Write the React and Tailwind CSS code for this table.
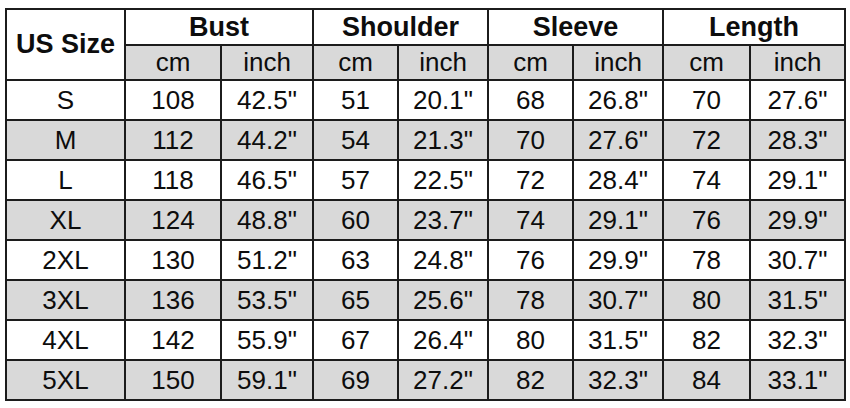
import React from 'react';

const rows = [
    ['S', '108', '42.5"', '51', '20.1"', '68', '26.8"', '70', '27.6"'],
    ['M', '112', '44.2"', '54', '21.3"', '70', '27.6"', '72', '28.3"'],
    ['L', '118', '46.5"', '57', '22.5"', '72', '28.4"', '74', '29.1"'],
    ['XL', '124', '48.8"', '60', '23.7"', '74', '29.1"', '76', '29.9"'],
    ['2XL', '130', '51.2"', '63', '24.8"', '76', '29.9"', '78', '30.7"'],
    ['3XL', '136', '53.5"', '65', '25.6"', '78', '30.7"', '80', '31.5"'],
    ['4XL', '142', '55.9"', '67', '26.4"', '80', '31.5"', '82', '32.3"'],
    ['5XL', '150', '59.1"', '69', '27.2"', '82', '32.3"', '84', '33.1"'],
];

const groups = ['Bust', 'Shoulder', 'Sleeve', 'Length'];

const cell = 'flex items-center justify-center';

const App = () => {
    return (
        <div className="w-[850px] h-[408px] bg-white pt-[8px] pl-[5px]" style={{ fontFamily: '"Liberation Sans", Arial, sans-serif' }}>
            <div className="inline-grid grid-cols-[117px_94px_90px_83px_88px_83px_88px_85px_93px] grid-rows-[34px_33px_repeat(8,38px)] gap-[2px] p-[2px] bg-[#1c1c1c] text-[#0d0d0d]">
                <div className={`${cell} row-span-2 bg-white text-[27px] font-bold`}>US Size</div>
                {groups.map((g) => (
                    <div key={g} className={`${cell} col-span-2 bg-white text-[27px] font-bold`}>
                        {g}
                    </div>
                ))}
                {groups.map((g) => (
                    <React.Fragment key={g + '-units'}>
                        <div className={`${cell} bg-[#d9d9d9] text-[26px]`}>cm</div>
                        <div className={`${cell} bg-[#d9d9d9] text-[26px]`}>inch</div>
                    </React.Fragment>
                ))}
                {rows.map((row, i) =>
                    row.map((v, j) => (
                        <div
                            key={i + '-' + j}
                            className={`${cell} text-[26px] ${i % 2 === 1 ? 'bg-[#d9d9d9]' : 'bg-white'}`}
                        >
                            {v}
                        </div>
                    ))
                )}
            </div>
        </div>
    );
};

export default App;
